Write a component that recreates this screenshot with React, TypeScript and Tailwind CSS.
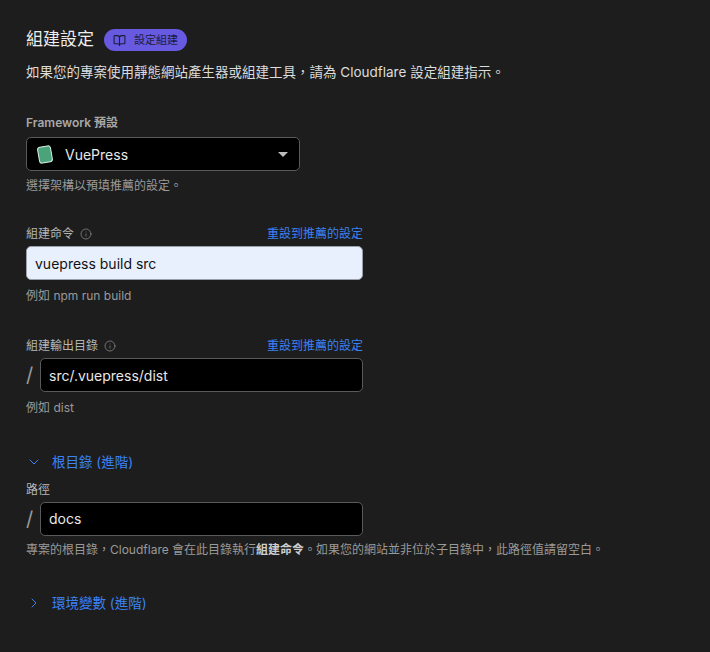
import { ChevronDown, ChevronRight, Info, BookOpen } from "lucide-react"

const font = { fontFamily: '"Inter", "Noto Sans CJK TC", sans-serif' }

function Label({ text, info, reset }: { text: string; info?: boolean; reset?: boolean }) {
  return (
    <div className="flex items-end justify-between w-[337px] h-[18px] mb-[3px]">
      <span className="flex items-center gap-[6px] text-[12px] text-[#b6b6b6]">
        {text}
        {info && <Info className="h-[12px] w-[12px] text-[#8a8a8a]" strokeWidth={1.5} />}
      </span>
      {reset && <span className="text-[12px] text-[#3b82f6]">重設到推薦的設定</span>}
    </div>
  )
}

function SlashInput({ value }: { value: string }) {
  return (
    <div className="flex items-center w-[337px]">
      <span className="w-[14px] text-[20px] text-[#9a9a9a] leading-none">/</span>
      <div className="flex-1 h-[34px] rounded-[5px] border border-[#5a5a5a] bg-black px-[8px] flex items-center text-[14px] text-[#e8e8e8]">
        {value}
      </div>
    </div>
  )
}

export default function App() {
  return (
    <div style={font} className="min-h-[652px] bg-[#1d1d1d] px-[26px] pt-[29px] text-[#e6e6e6]">
      <div className="flex items-center gap-[10px] h-[22px]">
        <h2 className="text-[17px] text-[#eeeeee]">組建設定</h2>
        <span className="flex items-center gap-[8px] h-[22px] px-[9px] rounded-full bg-[#6759e0] text-[11px] text-[#1d1d3a]">
          <BookOpen className="h-[13px] w-[13px]" strokeWidth={2} />
          設定組建
        </span>
      </div>
      <p className="mt-[11px] text-[13.5px] text-[#dcdcdc]">
        如果您的專案使用靜態網站產生器或組建工具，請為 Cloudflare 設定組建指示。
      </p>

      <div className="mt-[32px] text-[12px] font-semibold text-[#a8a8a8]">Framework 預設</div>
      <div className="mt-[5px] flex items-center w-[274px] h-[34px] rounded-[5px] border border-[#5a5a5a] bg-black px-[11px]">
        <span className="h-[17px] w-[14px] rounded-[3px] bg-[#4aa37a] border border-[#d9f2e6] rotate-[-10deg]" />
        <span className="ml-[13px] text-[14px] text-[#e8e8e8]">VuePress</span>
        <span className="ml-auto w-0 h-0 border-l-[5px] border-r-[5px] border-t-[5px] border-l-transparent border-r-transparent border-t-[#bdbdbd]" />
      </div>
      <p className="mt-[6px] text-[12px] text-[#9a9a9a]">選擇架構以預填推薦的設定。</p>

      <div className="mt-[30px]">
        <Label text="組建命令" info reset />
        <div className="w-[337px] h-[34px] rounded-[5px] border border-[#9aa0aa] bg-[#e8f0fe] px-[8px] flex items-center text-[14px] text-[#111]">
          vuepress build src
        </div>
        <p className="mt-[7px] text-[12px] text-[#9a9a9a]">例如 npm run build</p>
      </div>

      <div className="mt-[32px]">
        <Label text="組建輸出目錄" info reset />
        <SlashInput value="src/.vuepress/dist" />
        <p className="mt-[7px] text-[12px] text-[#9a9a9a]">例如 dist</p>
      </div>

      <div className="mt-[35px] flex items-center gap-[10px] text-[13.5px] text-[#3b82f6]">
        <ChevronDown className="h-[16px] w-[16px]" strokeWidth={1.5} />
        根目錄 (進階)
      </div>
      <div className="mt-[8px]">
        <div className="text-[12px] text-[#b6b6b6] mb-[3px]">路徑</div>
        <SlashInput value="docs" />
        <p className="mt-[5px] text-[12px] text-[#9a9a9a]">
          專案的根目錄，Cloudflare 會在此目錄執行<span className="font-bold text-[#cfcfcf]">組建命令</span>。如果您的網站並非位於子目錄中，此路徑值請留空白。
        </p>
      </div>

      <div className="mt-[34px] flex items-center gap-[10px] text-[13.5px] text-[#3b82f6]">
        <ChevronRight className="h-[16px] w-[16px]" strokeWidth={1.5} />
        環境變數 (進階)
      </div>
    </div>
  )
}
